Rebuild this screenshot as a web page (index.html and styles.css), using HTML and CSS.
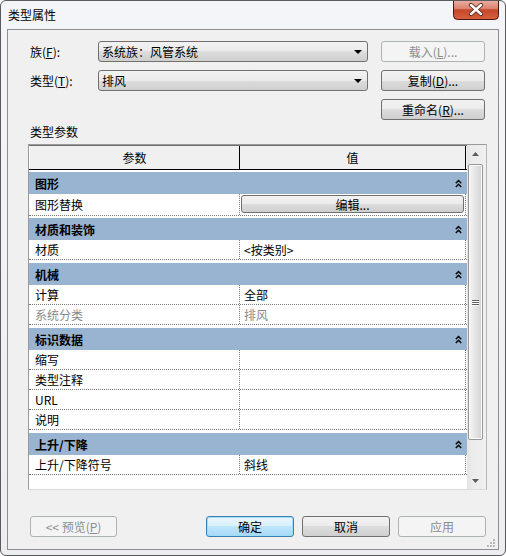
FILE: index.html
```html
<!DOCTYPE html>
<html lang="zh-CN">
<head>
<meta charset="utf-8">
<title>类型属性</title>
<link rel="stylesheet" href="styles.css">
</head>
<body>
<div class="window">
  <div class="titlebar">
    <span class="title">类型属性</span>
    <div class="close">
      <svg width="46" height="20" viewBox="0 0 46 20">
        <defs>
          <linearGradient id="cg" x1="0" y1="0" x2="0" y2="1">
            <stop offset="0" stop-color="#eab3a6"/>
            <stop offset="0.45" stop-color="#d9806b"/>
            <stop offset="0.5" stop-color="#c5462c"/>
            <stop offset="1" stop-color="#d7603f"/>
          </linearGradient>
        </defs>
        <path d="M0.5 0 V15.5 Q0.5 19.5 4.5 19.5 H41.5 Q45.5 19.5 45.5 15.5 V0" fill="url(#cg)" stroke="#4a1a10"/>
        <path d="M18 5 L28 14 M28 5 L18 14" stroke="#5a2a20" stroke-width="4.2" stroke-linecap="round"/>
        <path d="M18 5 L28 14 M28 5 L18 14" stroke="#ffffff" stroke-width="2.4" stroke-linecap="round"/>
      </svg>
    </div>
  </div>
  <div class="client">
    <div class="form">
      <span class="lbl">族(<u>F</u>):</span>
      <div class="combo"><span>系统族：风管系统</span><span class="arrow"></span></div>
      <div class="btn disabled">载入(<u>L</u>)...</div>
      <span class="lbl">类型(<u>T</u>):</span>
      <div class="combo"><span>排风</span><span class="arrow"></span></div>
      <div class="btn">复制(<u>D</u>)...</div>
      <div class="btn col3">重命名(<u>R</u>)...</div>
    </div>
    <div class="section">类型参数</div>
    <div class="table">
      <div class="grid">
        <div class="hdr"><div class="hc c1">参数</div><div class="hc c2">值</div></div>

        <div class="group tight"><span>图形</span><svg class="chev" width="7" height="9" viewBox="0 0 7 9"><path d="M0.8 4.2 L3.5 1.5 L6.2 4.2 M0.8 8 L3.5 5.3 L6.2 8" fill="none" stroke="#000" stroke-width="1.4"/></svg></div>
        <div class="row tall"><div class="cell c1">图形替换</div><div class="cell c2 btncell"><div class="editbtn">编辑...</div></div></div>

        <div class="group tight"><span>材质和装饰</span><svg class="chev" width="7" height="9" viewBox="0 0 7 9"><path d="M0.8 4.2 L3.5 1.5 L6.2 4.2 M0.8 8 L3.5 5.3 L6.2 8" fill="none" stroke="#000" stroke-width="1.4"/></svg></div>
        <div class="row"><div class="cell c1">材质</div><div class="cell c2">&lt;按类别&gt;</div></div>

        <div class="group"><span>机械</span><svg class="chev" width="7" height="9" viewBox="0 0 7 9"><path d="M0.8 4.2 L3.5 1.5 L6.2 4.2 M0.8 8 L3.5 5.3 L6.2 8" fill="none" stroke="#000" stroke-width="1.4"/></svg></div>
        <div class="row"><div class="cell c1">计算</div><div class="cell c2">全部</div></div>
        <div class="row ro"><div class="cell c1">系统分类</div><div class="cell c2">排风</div></div>

        <div class="group"><span>标识数据</span><svg class="chev" width="7" height="9" viewBox="0 0 7 9"><path d="M0.8 4.2 L3.5 1.5 L6.2 4.2 M0.8 8 L3.5 5.3 L6.2 8" fill="none" stroke="#000" stroke-width="1.4"/></svg></div>
        <div class="row"><div class="cell c1">缩写</div><div class="cell c2"></div></div>
        <div class="row"><div class="cell c1">类型注释</div><div class="cell c2"></div></div>
        <div class="row"><div class="cell c1">URL</div><div class="cell c2"></div></div>
        <div class="row"><div class="cell c1">说明</div><div class="cell c2"></div></div>

        <div class="group"><span>上升/下降</span><svg class="chev" width="7" height="9" viewBox="0 0 7 9"><path d="M0.8 4.2 L3.5 1.5 L6.2 4.2 M0.8 8 L3.5 5.3 L6.2 8" fill="none" stroke="#000" stroke-width="1.4"/></svg></div>
        <div class="row"><div class="cell c1">上升/下降符号</div><div class="cell c2">斜线</div></div>
        <div class="filler"></div>
      </div>
      <div class="scrollbar">
        <div class="sbtn"><svg width="7" height="4" viewBox="0 0 7 4"><path d="M0 4 L3.5 0 L7 4 Z" fill="#5c5c5c"/></svg></div>
        <div class="thumb">
          <div class="grip"><i></i><i></i><i></i></div>
        </div>
        <div class="track"></div>
        <div class="sbtn"><svg width="7" height="4" viewBox="0 0 7 4"><path d="M0 0 L7 0 L3.5 4 Z" fill="#5c5c5c"/></svg></div>
      </div>
    </div>
    <div class="footer">
      <div class="btn disabled wide">&lt;&lt; 预览(<u>P</u>)</div>
      <div class="actions">
        <div class="btn default wide">确定</div>
        <div class="btn wide">取消</div>
        <div class="btn disabled wide">应用</div>
      </div>
    </div>
    <div class="griprow">
      <svg width="10" height="10" viewBox="0 0 10 10">
        <g fill="#b9b9b9">
          <rect x="7" y="1" width="2" height="2"/>
          <rect x="4" y="4" width="2" height="2"/><rect x="7" y="4" width="2" height="2"/>
          <rect x="1" y="7" width="2" height="2"/><rect x="4" y="7" width="2" height="2"/><rect x="7" y="7" width="2" height="2"/>
        </g>
      </svg>
    </div>
  </div>
</div>
</body>
</html>
```

FILE: styles.css
```css
* { box-sizing: border-box; }

html, body {
  margin: 0;
  padding: 0;
  background: #ffffff;
}

body {
  font-family: "Noto Sans CJK SC", "Liberation Sans", sans-serif;
  font-size: 12px;
  color: #000;
}

u { text-decoration: underline; text-underline-offset: 1px; }

.window {
  width: 506px;
  height: 556px;
  border: 1px solid #5a5a5a;
  border-radius: 6px;
  background: linear-gradient(#f3f5f8, #eceef2);
  display: flex;
  flex-direction: column;
  overflow: hidden;
}

.titlebar {
  height: 28px;
  display: flex;
  align-items: flex-start;
  justify-content: space-between;
  flex: none;
}

.title {
  padding-left: 7px;
  line-height: 28px;
  font-size: 12px;
}

.close {
  margin-top: -1px;
  margin-right: 6px;
  width: 46px;
  height: 20px;
  display: flex;
}

.client {
  flex: 1;
  margin: 0 6px 5px 6px;
  border: 1px solid #8e8e8e;
  background: #f0f0f0;
  padding: 11px 12px 0 20px;
  display: flex;
  flex-direction: column;
}

.form {
  display: grid;
  grid-template-columns: 57px 270px 104px;
  grid-template-rows: 21px 21px 21px;
  column-gap: 13px;
  row-gap: 8px;
}

.lbl {
  padding-left: 2px;
  line-height: 21px;
  white-space: nowrap;
}

.combo {
  border: 1px solid #707070;
  border-radius: 3px;
  background: linear-gradient(#f2f2f2, #ebebeb 50%, #dddddd 50%, #cfcfcf);
  display: flex;
  align-items: center;
  justify-content: space-between;
  padding: 0 5px 0 3px;
  line-height: 19px;
}

.arrow {
  width: 0;
  height: 0;
  border-left: 4px solid transparent;
  border-right: 4px solid transparent;
  border-top: 4px solid #000;
  margin-top: 1px;
}

.btn {
  border: 1px solid #707070;
  border-radius: 3px;
  background: linear-gradient(#f2f2f2, #ebebeb 50%, #dddddd 50%, #cfcfcf);
  display: flex;
  align-items: center;
  justify-content: center;
  line-height: 19px;
  height: 21px;
}

.btn.disabled {
  border-color: #adb2b5;
  background: #f4f4f4;
  color: #8d8d8d;
}

.btn.default {
  border-color: #3c7fb1;
  background: linear-gradient(#eaf6fd, #d9f0fc 50%, #bee6fd 50%, #a7d9f5);
  box-shadow: inset 0 0 0 1px #9fdcf7;
}

.col3 { grid-column: 3; grid-row: 3; }

.section {
  margin-top: 4px;
  line-height: 16px;
  padding-left: 2px;
}

.table {
  margin-top: 4px;
  width: 459px;
  height: 346px;
  border: 1px solid #9a9a9a;
  border-right-color: #b5b5b5;
  border-bottom-color: #dcdcdc;
  background: #f0f0f0;
  display: flex;
}

.grid {
  width: 438px;
  background: #ffffff;
  display: flex;
  flex-direction: column;
}

.hdr {
  display: flex;
  height: 25px;
  border-bottom: 1px solid #000;
  border-top: 1px solid #6f6f6f;
  background: #f0f0f0;
  flex: none;
}

.hc {
  display: flex;
  align-items: center;
  justify-content: center;
  border-right: 1px solid #000;
}

.hc.c1 { width: 211px; border-left: 1px solid #ffffff; }
.hc.c2 { width: 226px; }

.group {
  margin-top: 3px;
  height: 22px;
  background: #99b4d1;
  display: flex;
  align-items: center;
  justify-content: space-between;
  padding: 0 5px 0 6px;
  font-weight: bold;
  flex: none;
}

.group.tight { margin-top: 2px; }

.row {
  display: flex;
  height: 20px;
  border-bottom: 1px dotted #7a7a7a;
  flex: none;
}

.row.tall { height: 22px; }

.cell {
  display: flex;
  align-items: center;
  white-space: nowrap;
}

.cell.c1 {
  width: 211px;
  padding-left: 6px;
  border-right: 1px dotted #7a7a7a;
}

.cell.c2 {
  width: 226px;
  padding-left: 4px;
  border-right: 1px dotted #7a7a7a;
}

.row.ro .cell { color: #8a8a8a; }

.cell.btncell {
  padding: 1px 1px 2px 1px;
}

.editbtn {
  flex: 1;
  height: 18px;
  border: 1px solid #707070;
  border-radius: 3px;
  background: linear-gradient(#f2f2f2, #ebebeb 50%, #dddddd 50%, #cfcfcf);
  display: flex;
  align-items: center;
  justify-content: center;
}

.filler { flex: 1; }

.scrollbar {
  width: 17px;
  background: linear-gradient(90deg, #e3e3e3, #ececec 30%, #eeeeee);
  display: flex;
  flex-direction: column;
}

.sbtn {
  height: 17px;
  display: flex;
  align-items: center;
  justify-content: center;
  flex: none;
}

.thumb {
  margin: 2px 1px 0 1px;
  height: 276px;
  border: 1px solid #979797;
  border-radius: 2px;
  background: linear-gradient(90deg, #f5f5f5, #e6e6e6 45%, #d2d2d2);
  box-shadow: inset 0 0 0 1px #fbfbfb;
  display: flex;
  align-items: center;
  justify-content: center;
  flex: none;
}

.grip {
  display: flex;
  flex-direction: column;
  gap: 1px;
}

.grip i {
  display: block;
  width: 7px;
  height: 1px;
  background: #5f5f5f;
  box-shadow: 0 1px 0 #ffffff;
}

.track { flex: 1; }

.footer {
  margin-top: 26px;
  display: flex;
  justify-content: space-between;
  padding-left: 2px;
}

.actions {
  display: flex;
  gap: 8px;
}

.btn.wide { width: 88px; }
.footer > .btn.wide { width: 87px; }

.griprow {
  display: flex;
  justify-content: flex-end;
  margin-top: 1px;
  margin-right: -10px;
}
```
